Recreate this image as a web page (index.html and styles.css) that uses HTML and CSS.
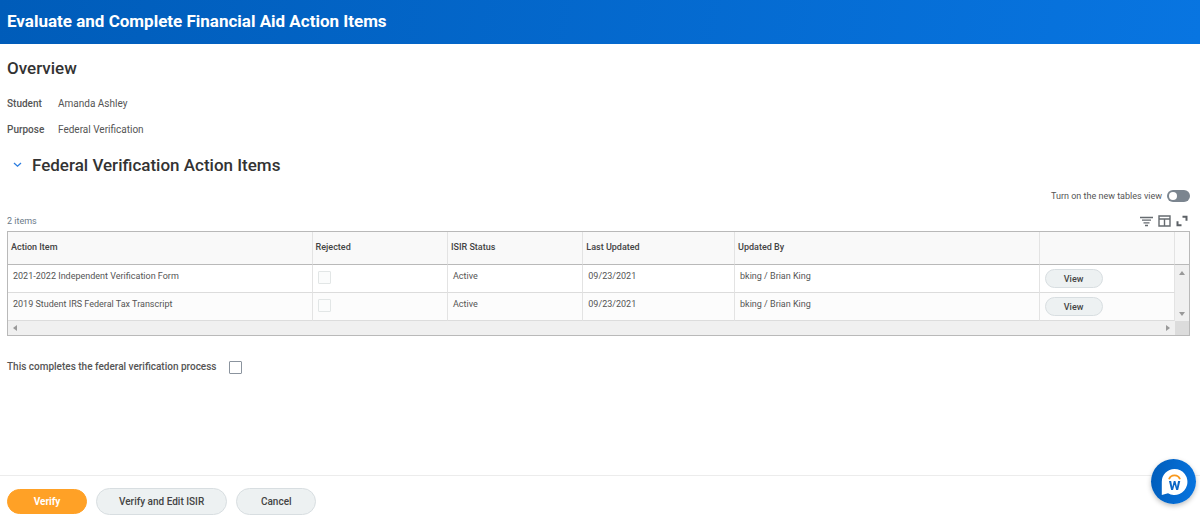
FILE: index.html
```html
<!DOCTYPE html>
<html lang="en">
<head>
<meta charset="UTF-8">
<meta name="viewport" content="width=device-width, initial-scale=1.0">
<title>Evaluate and Complete Financial Aid Action Items</title>
<link rel="stylesheet" href="styles.css">
</head>
<body>
  <header class="page-header">
    <h1>Evaluate and Complete Financial Aid Action Items</h1>
  </header>

  <main class="content">
    <h2>Overview</h2>
    <dl class="details">
      <dt>Student</dt><dd>Amanda Ashley</dd>
      <dt>Purpose</dt><dd>Federal Verification</dd>
    </dl>

    <div class="section-title">
      <button type="button" class="icon-btn" aria-label="Collapse section">
        <svg width="9" height="6" viewBox="0 0 9 6"><path d="M1 1l3.5 3.2L8 1" fill="none" stroke="#2b7de0" stroke-width="1.3"/></svg>
      </button>
      <h2>Federal Verification Action Items</h2>
    </div>

    <div class="view-toggle">
      <label for="newTables">Turn on the new tables view</label>
      <input type="checkbox" id="newTables" class="switch">
    </div>

    <div class="toolbar">
      <span class="count">2 items</span>
      <div class="tools">
        <button type="button" class="icon-btn" aria-label="Filter">
          <svg width="13" height="11" viewBox="0 0 13 11"><path d="M0 1.5h13M2 4.2h9M3.5 6.9h6M5 9.5h3" stroke="#666b70" stroke-width="1.3"/></svg>
        </button>
        <button type="button" class="icon-btn" aria-label="Columns">
          <svg width="13" height="12" viewBox="0 0 13 12"><path d="M1 1h11v10H1zM1 4h11M6.5 4v7" fill="none" stroke="#666b70" stroke-width="1.4"/></svg>
        </button>
        <button type="button" class="icon-btn" aria-label="Full screen">
          <svg width="12" height="12" viewBox="0 0 12 12"><path d="M6.5 1.8h4v4M1.5 6.2v4h4" fill="none" stroke="#5c6166" stroke-width="2"/></svg>
        </button>
      </div>
    </div>

    <div class="grid">
      <div class="grid-main">
        <table>
          <colgroup>
            <col class="col-wide"><col class="col-small"><col class="col-small"><col class="col-date"><col class="col-wide"><col class="col-small">
          </colgroup>
          <thead>
            <tr>
              <th>Action Item</th>
              <th>Rejected</th>
              <th>ISIR Status</th>
              <th>Last Updated</th>
              <th>Updated By</th>
              <th></th>
            </tr>
          </thead>
          <tbody>
            <tr>
              <td>2021-2022 Independent Verification Form</td>
              <td class="check"><input type="checkbox" class="box" aria-label="Rejected" disabled></td>
              <td>Active</td>
              <td>09/23/2021</td>
              <td>bking / Brian King</td>
              <td class="action"><button type="button" class="btn btn-small">View</button></td>
            </tr>
            <tr>
              <td>2019 Student IRS Federal Tax Transcript</td>
              <td class="check"><input type="checkbox" class="box" aria-label="Rejected" disabled></td>
              <td>Active</td>
              <td>09/23/2021</td>
              <td>bking / Brian King</td>
              <td class="action"><button type="button" class="btn btn-small">View</button></td>
            </tr>
          </tbody>
        </table>
        <div class="side">
          <div class="side-head"></div>
          <div class="scroll-y">
            <svg width="6" height="4" viewBox="0 0 6 4"><path d="M0 4l3-4 3 4z" fill="#999"/></svg>
            <svg width="6" height="4" viewBox="0 0 6 4"><path d="M0 0l3 4 3-4z" fill="#999"/></svg>
          </div>
        </div>
      </div>
      <div class="grid-bottom">
        <div class="scroll-x">
          <svg width="4" height="6" viewBox="0 0 4 6"><path d="M4 0L0 3l4 3z" fill="#999"/></svg>
          <svg width="4" height="6" viewBox="0 0 4 6"><path d="M0 0l4 3-4 3z" fill="#999"/></svg>
        </div>
        <div class="corner"></div>
      </div>
    </div>

    <div class="complete">
      <label for="complete">This completes the federal verification process</label>
      <input type="checkbox" id="complete" class="box">
    </div>
  </main>

  <footer class="actions">
    <button type="button" class="btn btn-primary">Verify</button>
    <button type="button" class="btn">Verify and Edit ISIR</button>
    <button type="button" class="btn">Cancel</button>
  </footer>

  <button type="button" class="chat" aria-label="Open assistant">
    <svg width="28" height="28" viewBox="0 0 28 28">
      <path d="M14.5 1a13 13 0 1 1-6.5 24.3L1.8 27V14A12.8 12.8 0 0 1 14.5 1z" fill="#fff"/>
      <path d="M9 11.3a5.8 5.8 0 0 1 11 0" fill="none" stroke="#f8981d" stroke-width="1.8"/>
      <text x="14.5" y="22" text-anchor="middle" class="chat-letter">w</text>
    </svg>
  </button>
</body>
</html>
```
FILE: styles.css
```css
* { box-sizing: border-box; }
body { margin: 0; min-height: 100vh; display: flex; flex-direction: column; font-family: Roboto, Arial, sans-serif; font-size: 10px; line-height: 14px; color: #555; background: #fff; }
h1, h2 { margin: 0; font-weight: 500; }
button, input { font-family: inherit; margin: 0; }
svg { display: block; }

.page-header { height: 44px; padding: 0 7px 2px; display: flex; align-items: center; background: linear-gradient(100deg, #005cb9, #0875e1); }
h1 { font-size: 17px; line-height: 20px; font-weight: 700; color: #fff; }
h2 { font-size: 17px; line-height: 20px; color: #333; }

.content { flex: 1; padding: 14px 10px 0 7px; }
.details { margin: 19px 0 0; display: grid; grid-template-columns: 39px 1fr; gap: 12px; }
.details dt { font-weight: 500; }
.details dd { margin: 0; }

.section-title { margin-top: 18px; padding-left: 6px; display: flex; align-items: center; gap: 10px; }
.icon-btn { padding: 0; border: 0; background: none; }

.view-toggle { margin-top: 14px; display: flex; justify-content: flex-end; align-items: center; gap: 5px; font-size: 9px; }
.switch { appearance: none; width: 23px; height: 12px; padding: 2px; border-radius: 6px; background: #7b858f; }
.switch::before { content: ""; display: block; width: 8px; height: 8px; border-radius: 50%; background: #fff; }
.switch:checked::before { margin-left: auto; }

.toolbar { margin-top: 11px; padding-bottom: 3px; display: flex; justify-content: space-between; align-items: center; font-size: 9px; }
.count { color: #6b7a89; }
.tools { display: flex; align-items: center; gap: 5px; padding-right: 2px; }

.grid { border: 1px solid #b9b9b9; font-size: 9px; }
.grid-main { display: flex; }
table { flex: 1; min-width: 0; width: 100%; border-collapse: separate; border-spacing: 0; table-layout: fixed; }
.col-wide { width: 26.1%; }
.col-small { width: 11.6%; }
.col-date { width: 13%; }
th { height: 33px; padding: 0 3px 2px; text-align: left; font-weight: 500; color: #444; background: #f9f9f9; border-right: 1px solid #e3e3e3; border-bottom: 1px solid #b9b9b9; }
td { height: 28px; padding: 4px 5px; vertical-align: top; border-right: 1px solid #e3e3e3; border-bottom: 1px solid #dcdcdc; }
tbody tr:nth-child(even) { background: #fcfcfc; }
td.check { padding-top: 6px; }

.side { flex: none; width: 14px; display: flex; flex-direction: column; }
.side-head { height: 33px; background: #f9f9f9; border-bottom: 1px solid #b9b9b9; }
.scroll-y { flex: 1; padding: 6px 0 5px; display: flex; flex-direction: column; justify-content: space-between; align-items: center; background: #f0f0f0; }
.grid-bottom { height: 14px; display: flex; }
.scroll-x { flex: 1; padding: 0 5px; display: flex; justify-content: space-between; align-items: center; background: #f0f0f0; }
.corner { width: 14px; background: #dcdcdc; }

.box { appearance: none; display: block; width: 13px; height: 13px; border: 1px solid #8b949e; border-radius: 1px; background: #fff; }
.box:checked { background: #0875e1; }
.box:disabled { border-color: #e2e6e6; background: #fbfcfc; }

.complete { margin-top: 24px; display: flex; align-items: center; gap: 12px; font-weight: 500; }

.actions { height: 46px; padding: 6px 7px 0; display: flex; align-items: center; gap: 9px; border-top: 1px solid #ececec; }
.btn { height: 27px; min-width: 80px; padding: 0 22px; border: 1px solid #d8dee1; border-radius: 14px; background: #edf1f2; color: #444; font-size: 10px; font-weight: 500; }
.btn-primary { height: 25px; border-color: #ffa126; background: #ffa126; color: #fff; font-weight: 700; }
.btn-small { display: block; min-width: 58px; height: 19px; padding: 0; font-size: 9px; }

.chat { position: fixed; right: 4px; bottom: 17px; width: 45px; height: 45px; padding: 0; display: flex; justify-content: center; align-items: center; border: 0; border-radius: 50%; background: linear-gradient(100deg, #005cb9, #0875e1); box-shadow: 0 2px 5px rgba(0, 0, 0, 0.25); }
.chat-letter { font-size: 16px; font-weight: 700; fill: #0b66c6; }
```
